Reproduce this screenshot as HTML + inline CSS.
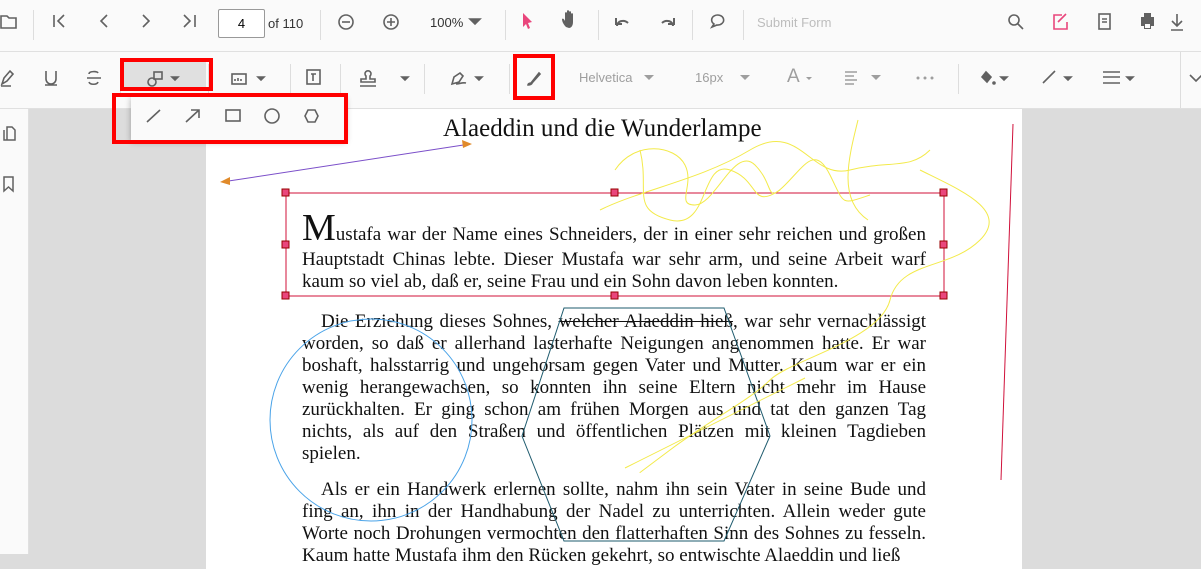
<!DOCTYPE html><html><head><style>
body{margin:0;width:1201px;height:554px;overflow:hidden;font-family:"Liberation Sans",sans-serif;background:#dcdcdc;position:relative}
.tb1{position:absolute;left:0;top:0;width:1201px;height:51px;background:#fafafa;border-bottom:1px solid #e0e0e0}
.tb2{position:absolute;left:0;top:52px;width:1201px;height:56px;background:#fafafa;border-bottom:1px solid #e0e0e0}
.side{position:absolute;left:0;top:109px;width:28px;height:445px;background:#fafafa;border-right:1px solid #e0e0e0}
.ab{position:absolute}
.sep{position:absolute;width:1px;background:#ddd}
.page{position:absolute;left:206px;top:109px;width:816px;height:460px;background:#fff}
.txt{position:absolute;left:302px;width:624px;font-family:"Liberation Serif",serif;font-size:19px;line-height:22px;text-align:justify;color:#111}
.g{color:#9e9e9e;font-size:13px}
.red{position:absolute;border:4px solid #f00;box-sizing:border-box;z-index:10}
</style></head><body>
<div class="tb1">
<svg class="ab" style="left:0;top:0" width="1201" height="51" fill="none" stroke="#616161" stroke-width="1.6">
<path d="M1 16h6l2 2h7v10H1z"/>
<path d="M54 15v12M64 15l-6 6 6 6"/><path d="M107 15l-6 6 6 6"/><path d="M143 15l6 6-6 6"/><path d="M184 15l6 6-6 6M195 15v12"/>
<circle cx="346" cy="22" r="7"/><path d="M342 22h8"/><circle cx="391" cy="22" r="7"/><path d="M387 22h8M391 18v8"/>
<path d="M470 19l5 5 5-5z" fill="#616161"/>
<path d="M523 13l9 9-4 1 2 5-2 1-2-5-3 3z" fill="#e9467c" stroke="none"/>
<path d="M566 27c-3-3-4-6-4-8 1-1 2 0 3 2v-8c0-1 2-1 2 0v6-8c0-1 2-1 2 0v8-7c0-1 2-1 2 0v7-5c0-1 2-1 2 0v8c0 4-2 6-4 6z" fill="#616161" stroke="none"/>
<path d="M617 26c0-5 7-7 11-3M616 18v6h6" stroke-width="2"/><path d="M673 26c0-5-7-7-11-3M674 18v6h-6" stroke-width="2"/>
<path d="M712 27l2-3a6 5 0 1 1 3 1z"/>
<circle cx="1014" cy="20" r="5"/><path d="M1018 24l5 5"/>
<path d="M1062 15h-8v14h13v-7M1058 22l8-8" stroke="#e9467c"/>
<rect x="1099" y="14" width="11" height="15"/><path d="M1102 19h5M1102 22h5"/>
<path d="M1141 17h13v9h-13z M1144 13h7v4h-7z M1144 23h7v6h-7z" fill="#616161" stroke="none"/><rect x="1145" y="24" width="5" height="4" fill="#fafafa" stroke="none"/>
<path d="M1177 14v11M1172 21l5 5 5-5M1171 30h12"/>
</svg>
<div class="sep" style="left:33px;top:10px;height:30px"></div>
<div class="ab" style="left:218px;top:9px;width:45px;height:27px;border:1px solid #999;border-radius:2px;background:#fff;font-size:13px;text-align:center;line-height:27px">4</div>
<div class="ab" style="left:268px;top:16px;font-size:13px;color:#333">of 110</div>
<div class="sep" style="left:320px;top:10px;height:30px"></div>
<div class="ab" style="left:430px;top:15px;font-size:13px;color:#333">100%</div>
<div class="sep" style="left:505px;top:10px;height:30px"></div>
<div class="sep" style="left:598px;top:10px;height:30px"></div>
<div class="sep" style="left:692px;top:10px;height:30px"></div>
<div class="sep" style="left:743px;top:10px;height:30px"></div>
<div class="ab g" style="left:757px;top:15px;color:#bdbdbd">Submit Form</div>
</div>
<div class="tb2">
<div class="ab" style="left:124px;top:8px;width:82px;height:30px;background:#e0e0e0"></div>
<svg class="ab" style="left:0;top:0" width="1201" height="56" fill="none" stroke="#616161" stroke-width="1.6">
<path d="M2 32l2-6 6-7 3 3-6 7zM1 34h10"/>
<path d="M46 19v8a5 5 0 0 0 10 0v-8M45 33h12"/>
<path d="M89 22c0-3 8-3 9-1M87 26h14M89 30c1 3 8 3 9 0"/>
<rect x="154" y="20" width="8" height="7"/><circle cx="152" cy="30" r="4"/>
<path d="M172 25l3 3 3-3z" fill="#616161"/>
<rect x="232" y="22" width="14" height="10"/><path d="M235 29v-2M238 29v-3M241 29v-2" /><path d="M258 25l3 3 3-3z" fill="#616161"/>
<rect x="307" y="18" width="13" height="14"/><path d="M311 22h5M313 22v7"/>
<path d="M366 24a3 3 0 1 1 4 0v3h5v3h-14v-3h5zM360 34h16"/><path d="M402 25l3 3 3-3z" fill="#616161"/>
<path d="M452 32l2-7 6-4 3 3-4 6zM456 32c4 0 6-2 10-1"/><path d="M476 25l3 3 3-3z" fill="#616161"/>
<path d="M531 31c-2 0-3 1-3 2 2 0 4-1 4-2l8-9-1-1z" fill="#616161"/>
<path d="M644 23l5 5 5-5z M740 23l5 5 5-5z M806 25l3 3 3-3z M871 23l5 5 5-5z" fill="#9e9e9e" stroke="none"/>
<path d="M845 20h12M845 24h9M845 28h12M845 32h9" stroke="#9e9e9e"/>
<circle cx="918" cy="26" r="1.5" fill="#9e9e9e" stroke="none"/><circle cx="925" cy="26" r="1.5" fill="#9e9e9e" stroke="none"/><circle cx="932" cy="26" r="1.5" fill="#9e9e9e" stroke="none"/>
<path d="M982 25l4-5 5 5-4 5z" fill="#616161"/><circle cx="994" cy="31" r="1" fill="#616161"/><path d="M1001 25l3 3 3-3z M1065 25l3 3 3-3z M1127 25l3 3 3-3z" fill="#616161"/>
<path d="M1043 31l12-12"/>
<path d="M1103 20h17M1103 25h17M1103 31h17"/>
<path d="M1190 23l6 6 6-6"/>
</svg>
<div class="sep" style="left:120px;top:12px;height:30px"></div>
<div class="sep" style="left:208px;top:12px;height:30px"></div>
<div class="sep" style="left:290px;top:12px;height:30px"></div>
<div class="sep" style="left:340px;top:12px;height:30px"></div>
<div class="sep" style="left:424px;top:12px;height:30px"></div>
<div class="sep" style="left:509px;top:12px;height:30px"></div>
<div class="sep" style="left:958px;top:12px;height:30px"></div>
<div class="sep" style="left:1180px;top:0;height:56px"></div>
<div class="ab g" style="left:579px;top:18px">Helvetica</div>
<div class="ab g" style="left:695px;top:18px">16px</div>
<div class="ab" style="left:787px;top:14px;font-size:19px;color:#9e9e9e">A</div>
</div>
<div class="side"><svg width="28" height="100" fill="none" stroke="#616161" stroke-width="1.5"><path d="M4 21v10h6M7 18h5l3 3v10H7z"/><path d="M4 68h9v14l-4.5-4-4.5 4z"/></svg></div>
<div class="page"></div>
<div class="ab" style="left:131px;top:96px;width:215px;height:44px;background:#fafafa;box-shadow:0 2px 6px rgba(0,0,0,.3);z-index:5"><svg width="215" height="44" fill="none" stroke="#616161" stroke-width="1.6"><path d="M16 26l13-12M55 26l13-12M60 14h8v8"/><rect x="95" y="14" width="14" height="11"/><circle cx="141" cy="20" r="7"/><path d="M177 14h7l3 6-3 6h-7l-3-6z"/></svg></div>
<div class="ab" style="left:443px;top:115px;font-family:'Liberation Serif',serif;font-size:25px;color:#111">Alaeddin und die Wunderlampe</div>
<div class="txt" style="top:207px"><span style="font-size:38px;line-height:42px">M</span>ustafa war der Name eines Schneiders, der in einer sehr reichen und großen Hauptstadt Chinas lebte. Dieser Mustafa war sehr arm, und seine Arbeit warf kaum so viel ab, daß er, seine Frau und ein Sohn davon leben konnten.</div>
<div class="txt" style="top:311px;text-indent:19px">Die Erziehung dieses Sohnes, <s>welcher Alaeddin hieß</s>, war sehr vernachlässigt worden, so daß er allerhand lasterhafte Neigungen angenommen hatte. Er war boshaft, halsstarrig und ungehorsam gegen Vater und Mutter. Kaum war er ein wenig herangewachsen, so konnten ihn seine Eltern nicht mehr im Hause zurückhalten. Er ging schon am frühen Morgen aus und tat den ganzen Tag nichts, als auf den Straßen und öffentlichen Plätzen mit kleinen Tagdieben spielen.</div>
<div class="txt" style="top:479px;text-indent:19px">Als er ein Handwerk erlernen sollte, nahm ihn sein Vater in seine Bude und fing an, ihn in der Handhabung der Nadel zu unterrichten. Allein weder gute Worte noch Drohungen vermochten den flatterhaften Sinn des Sohnes zu fesseln. Kaum hatte Mustafa ihm den Rücken gekehrt, so entwischte Alaeddin und ließ</div>
<svg class="ab" style="left:0;top:0" width="1201" height="554" fill="none">
<path d="M222 182L470 144" stroke="#7b4fc9"/><path d="M220 182l10-5 0 8z M472 144l-10-4 1 8z" fill="#e08a2a"/>
<rect x="286" y="193" width="658" height="103" stroke="#d0103a"/>
<g fill="#e9467c" stroke="#900"><rect x="282" y="189" width="7" height="7"/><rect x="611" y="189" width="7" height="7"/><rect x="940" y="189" width="7" height="7"/><rect x="282" y="241" width="7" height="7"/><rect x="940" y="241" width="7" height="7"/><rect x="282" y="292" width="7" height="7"/><rect x="611" y="292" width="7" height="7"/><rect x="940" y="292" width="7" height="7"/></g>
<circle cx="371" cy="420" r="101" stroke="#4aa3e8"/>
<path d="M564 308h160l46 128-46 105H564l-42-105z" stroke="#1e5b6e"/>
<path d="M1013 124L1001 480" stroke="#d0103a"/>
<g stroke="#f3ea4a"><path d="M615 170c20-30 60-25 70-5s-10 40 10 40 40-60 60-40 10 40 30 20 30-40 45-10 10 30 40 20"/>
<path d="M600 210c40-20 100-30 150-60s60 30 100 20 60 0 80-20"/>
<path d="M640 150c10 40-10 60 30 70s30-60 60-50 20 40 50 20"/>
<path d="M858 120c-10 40-20 80 10 100"/>
<path d="M920 170c40 20 90 40 60 70s-80 20-90 60-100 60-120 80-60 40-100 70-40 30-0 0"/>
<path d="M625 468c60-30 120-60 180-90"/></g>
</svg>
<div class="red" style="left:120px;top:58px;width:93px;height:33px"></div>
<div class="red" style="left:112px;top:93px;width:236px;height:51px"></div>
<div class="red" style="left:513px;top:54px;width:42px;height:46px"></div>
</body></html>
